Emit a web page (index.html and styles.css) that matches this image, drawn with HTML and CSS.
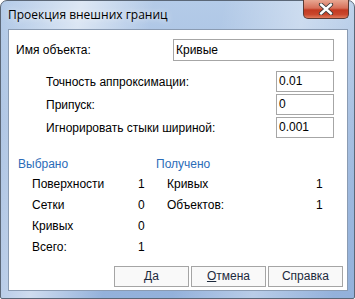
FILE: index.html
```html
<!DOCTYPE html>
<html lang="ru">
<head>
<meta charset="utf-8">
<link rel="stylesheet" href="styles.css">
</head>
<body>
<div class="window">
  <div class="titlebar">
    <span class="title">Проекция внешних границ</span>
    <div class="close">
      <svg width="18" height="12" viewBox="0 0 18 12">
        <path d="M4 1.5 L14 10.5 M14 1.5 L4 10.5" stroke="#3a3a3a" stroke-width="4.2" stroke-linecap="round"/>
        <path d="M4 1.5 L14 10.5 M14 1.5 L4 10.5" stroke="#ffffff" stroke-width="2.4" stroke-linecap="round"/>
      </svg>
    </div>
  </div>
  <div class="client">
    <div class="name-row">
      <span class="name-label">Имя объекта:</span>
      <div class="field name-field">Кривые</div>
    </div>
    <div class="params">
      <div class="param"><span class="param-label">Точность аппроксимации:</span><div class="field small">0.01</div></div>
      <div class="param"><span class="param-label">Припуск:</span><div class="field small">0</div></div>
      <div class="param"><span class="param-label">Игнорировать стыки шириной:</span><div class="field small">0.001</div></div>
    </div>
    <div class="stats">
      <div class="col col-left">
        <div class="heading">Выбрано</div>
        <div class="row"><span class="item">Поверхности</span><span class="val">1</span></div>
        <div class="row"><span class="item">Сетки</span><span class="val">0</span></div>
        <div class="row"><span class="item">Кривых</span><span class="val">0</span></div>
        <div class="row"><span class="item">Всего:</span><span class="val">1</span></div>
      </div>
      <div class="col col-right">
        <div class="heading">Получено</div>
        <div class="row"><span class="item">Кривых</span><span class="val">1</span></div>
        <div class="row"><span class="item">Объектов:</span><span class="val">1</span></div>
      </div>
    </div>
    <div class="buttons">
      <div class="btn">Да</div>
      <div class="btn"><u>О</u>тмена</div>
      <div class="btn">Справка</div>
    </div>
  </div>
</div>
</body>
</html>
```
FILE: styles.css
```css
html, body {
  margin: 0;
  padding: 0;
  width: 355px;
  height: 299px;
  overflow: hidden;
  background: #ffffff;
}
.window {
  box-sizing: border-box;
  width: 355px;
  height: 299px;
  display: flex;
  flex-direction: column;
  border: 1px solid #5b6777;
  border-radius: 7px 7px 2px 2px;
  background:
    linear-gradient(100deg, rgba(255,255,255,0.0) 0%, rgba(255,255,255,0.55) 20%, rgba(255,255,255,0.0) 38%, rgba(255,255,255,0.0) 55%, rgba(255,255,255,0.35) 75%, rgba(255,255,255,0) 95%),
    linear-gradient(180deg, #b4cbe8 0%, #a3bde0 40%, #93b1db 100%);
  font-family: "Liberation Sans", Arial, sans-serif;
  font-size: 12px;
  color: #000;
}
.titlebar {
  height: 28px;
  display: flex;
  align-items: flex-start;
  justify-content: space-between;
  padding-left: 7px;
  padding-right: 5px;
}
.title {
  font-family: "Open Sans", "DejaVu Sans", sans-serif;
  font-size: 12px;
  line-height: 14px;
  margin-top: 7px;
  color: #000;
  text-shadow: 0 0 6px rgba(255,255,255,0.9);
}
.close {
  width: 46px;
  height: 19px;
  margin-top: -1px;
  box-sizing: border-box;
  border: 1px solid #5a3a34;
  border-top: none;
  border-radius: 0 0 5px 5px;
  background: linear-gradient(180deg, #e8a792 0%, #d7705a 45%, #c23a22 55%, #c9462c 80%, #e07a5c 100%);
  display: flex;
  align-items: center;
  justify-content: center;
}
.client {
  flex: 1;
  margin: 0 6px 7px 7px;
  background: #ffffff;
  border: 1px solid #8a9bb2;
  display: flex;
  flex-direction: column;
  padding: 9px 4px 3px 7px;
}
.name-row {
  display: flex;
  align-items: center;
  height: 22px;
}
.name-label {
  width: 157px;
}
.field {
  box-sizing: border-box;
  border: 1px solid #a6a6a6;
  background: #fff;
  height: 21px;
  line-height: 19px;
  padding-left: 2px;
}
.name-field {
  width: 161px;
  height: 22px;
  line-height: 20px;
}
.params {
  margin-top: 10px;
  display: flex;
  flex-direction: column;
  gap: 2px;
}
.param {
  display: flex;
  align-items: center;
  height: 21px;
}
.param-label {
  width: 230px;
  padding-left: 30px;
}
.field.small {
  width: 58px;
}
.stats {
  margin-top: 17px;
  display: flex;
}
.col {
  display: flex;
  flex-direction: column;
}
.col-left {
  width: 136px;
  padding-left: 2px;
}
.col-right {
  flex: 1;
  padding-left: 2px;
}
.heading {
  color: #2b6cb8;
  height: 19px;
  line-height: 19px;
}
.row {
  display: flex;
  height: 21px;
  line-height: 21px;
}
.item {
  padding-left: 14px;
}
.col-left .item {
  width: 106px;
}
.col-right .item {
  width: 149px;
  padding-left: 11px;
}
.buttons {
  margin-top: auto;
  display: flex;
  justify-content: flex-end;
  gap: 2px;
}
.btn {
  box-sizing: border-box;
  width: 75px;
  height: 21px;
  border: 1px solid #a5a5a5;
  background: #f9f9f9;
  color: #1d2a3d;
  text-align: center;
  line-height: 19px;
}
.btn u {
  text-decoration: underline;
}
```
